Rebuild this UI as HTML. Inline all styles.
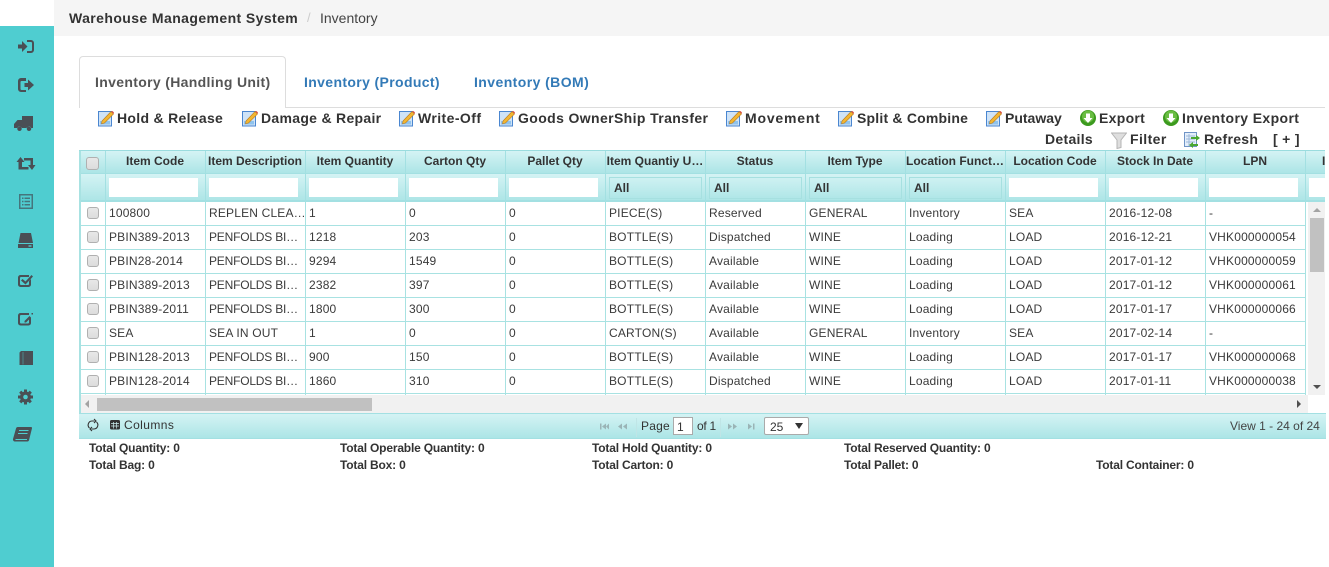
<!DOCTYPE html>
<html><head><meta charset="utf-8"><style>
*{box-sizing:border-box}
html,body{margin:0;padding:0;background:#fff}
body{width:1329px;height:567px;overflow:hidden;position:relative;font-family:"Liberation Sans",sans-serif;color:#333}
.a{position:absolute;white-space:nowrap}
#side{left:0;top:26px;width:54px;height:541px;background:#4fcdd0}
.tb{font-weight:bold;font-size:14px;letter-spacing:.3px;line-height:20px;color:#333}
.tb svg{position:absolute;left:-19px;top:1px;width:16px;height:18px}
.h{top:151px;height:22px;line-height:21px;text-align:center;font-weight:bold;font-size:12px;color:#333;width:100px;padding-right:1px;border-right:1px solid #a3e0e2;overflow:hidden}
.f{top:174px;height:27px;width:100px;border-right:1px solid #a3e0e2}
.f i{position:absolute;left:3px;top:4px;width:89px;height:19px;background:#fff;display:block}
.f b{position:absolute;left:3px;top:3px;width:93px;height:22px;border:1px solid #a6e0e0;font-size:12px;line-height:21px;padding-left:4px;color:#333}
.c{height:24px;line-height:23px;font-size:12px;letter-spacing:.18px;color:#3a3a3a;border-right:1px solid #a8e2e2;border-bottom:1px solid #a8e2e2;padding-left:3px;overflow:hidden;white-space:nowrap}
.d{letter-spacing:-.2px}
.cb{position:absolute;width:12px;height:12px;border:1px solid #b0b0b0;border-radius:3px;background:linear-gradient(#e8e8e8,#dcdcdc)}
.t{font-weight:bold;font-size:12px;line-height:14px;color:#333;letter-spacing:-.18px}
</style></head><body>
<div class="a" style="left:54px;top:0;width:1275px;height:36px;background:#f5f5f5"></div>
<div class="a" style="left:69px;top:9px;font-size:14px;font-weight:bold;letter-spacing:.41px;line-height:18px">Warehouse Management System</div>
<div class="a" style="left:307px;top:9px;font-size:13px;color:#ccc;line-height:18px">/</div>
<div class="a" style="left:320px;top:9px;font-size:14px;line-height:18px;color:#444">Inventory</div>

<div class="a" id="side"></div>
<svg class="a" style="left:0;top:0" width="54" height="567" viewBox="0 0 54 567" fill="#4a4f55">
<path d="M18 44.500h4v-3.500l5.500 5.500-5.500 5.500v-3.500h-4zM27 40h4a3 3 0 0 1 3 3v7a3 3 0 0 1-3 3h-4v-2h4a1 1 0 0 0 1-1v-7a1 1 0 0 0-1-1h-4z"/>
<path d="M26 78h-5a3 3 0 0 0-3 3v8a3 3 0 0 0 3 3h5v-2h-4.500a1 1 0 0 1-1-1v-7a1 1 0 0 1 1-1h4.500zM24.500 83h3.500v-3.500l6 5.500-6 5.500V87h-3.500z"/>
<path fill-rule="evenodd" d="M22 116h11v12h-2a2.500 2.500 0 0 0-4.500 0h-4.500a2.500 2.500 0 0 0-4.500 0H14v-4l3.500-4H22zM19.500 126.500a2.200 2.200 0 1 1 0 4.500 2.200 2.200 0 0 1 0-4.500zM29 126.500a2.200 2.200 0 1 1 0 4.500 2.200 2.200 0 0 1 0-4.500z"/>
<path d="M20.500 157l4 5h-2.500v5h6.500l0 2.500H18.500V162H16.500zM32 170l-4-5h2.500v-4.500H24V158h9v7h2.500z"/>
<path fill-rule="evenodd" d="M19 194h14v15H19zM20.500 195.500v12h11v-12zM22 197.500h1.500v1.500H22zm2.500 0h5.500v1.500h-5.500zM22 200.800h1.500v1.500H22zm2.500 0h5.500v1.500h-5.500zM22 204h1.500v1.500H22zm2.500 0h5.500v1.500h-5.500z" fill="#45757c"/>
<path d="M20.500 233h10.500l2 10H18.500zM18 244h15v4H18z"/><rect x="28.500" y="245" width="3" height="2" fill="#4fcdd0" opacity=".7"/>
<path d="M21 275h8v2h-8a1 1 0 0 0-1 1v6a1 1 0 0 0 1 1h7a1 1 0 0 0 1-1v-3l2-2v5.500a2.500 2.500 0 0 1-2.500 2.500h-8a2.500 2.500 0 0 1-2.500-2.500v-7a2.500 2.500 0 0 1 2.500-2.500zM22.500 279l3 2.500 6-6.500 1.500 1.500-7.500 8-4.500-4z"/>
<path d="M21 313h8v2h-8a1 1 0 0 0-1 1v6.500a1 1 0 0 0 1 1h7a1 1 0 0 0 1-1v-3l2-2v5.500a2.500 2.500 0 0 1-2.500 2.500h-8a2.500 2.500 0 0 1-2.500-2.500v-7.500a2.500 2.500 0 0 1 2.500-2.500zM29.500 316l1.500 1.500-5 5h-1.500v-1.500zM31.500 313h1.500v1.500h-1.500z"/>
<path d="M19.500 352.500l1.500-1.500h12v14H19.500z"/><rect x="22.500" y="352" width="1" height="12.500" fill="#4fcdd0" opacity=".45"/>
<g transform="translate(25.500 397)"><circle r="5.500"/><rect x="-1.500" y="-7.500" width="3" height="15"/><rect x="-1.500" y="-7.500" width="3" height="15" transform="rotate(45)"/><rect x="-1.500" y="-7.500" width="3" height="15" transform="rotate(90)"/><rect x="-1.500" y="-7.500" width="3" height="15" transform="rotate(135)"/><circle r="2.300" fill="#4fcdd0"/></g>
<path d="M18 427h13a1 1 0 0 1 1 1.300l-3 12a1.500 1.500 0 0 1-1.500 1.200H15a2 2 0 0 1-2-2.500l3-10.500a2 2 0 0 1 2-1.500z"/>
<path d="M19 430.500h9.500M18 433.500h9.500" stroke="#4fcdd0" stroke-width="1.100"/><path d="M15.500 439.500h11.500" stroke="#4fcdd0" stroke-width="1"/>
</svg>

<!-- tabs -->
<div class="a" style="left:286px;top:107px;width:1039px;height:1px;background:#ddd"></div>
<div class="a" style="left:79px;top:56px;width:207px;height:52px;background:#fff;border:1px solid #ddd;border-bottom:0;border-radius:4px 4px 0 0"></div>
<div class="a" style="left:95px;top:73px;font-size:14px;font-weight:bold;letter-spacing:.33px;line-height:18px;color:#555">Inventory (Handling Unit)</div>
<div class="a" style="left:304px;top:73px;font-size:14px;font-weight:bold;letter-spacing:.36px;line-height:18px;color:#337ab7">Inventory (Product)</div>
<div class="a" style="left:474px;top:73px;font-size:14px;font-weight:bold;letter-spacing:.42px;line-height:18px;color:#337ab7">Inventory (BOM)</div>

<!-- toolbar -->
<svg width="0" height="0" style="position:absolute"><defs>
<symbol id="p" viewBox="0 0 16 18"><rect x=".5" y="2.500" width="13" height="14.500" fill="#cfe3f7" stroke="#4a86d0"/><rect x="2" y="12" width="10" height="3.500" fill="#8fc3ee"/><path d="M4 12L13 2.500l2.500 2.500L6.500 14l-3 .8z" fill="#f2b632" stroke="#b87a1e" stroke-width=".6"/><path d="M13 2.500l2.500 2.500 .5-1.500-1.500-1.500z" fill="#d9564a"/></symbol>
<symbol id="g" viewBox="0 0 16 16"><circle cx="8" cy="8" r="8" fill="#3c9a1e"/><circle cx="8" cy="6.500" r="6" fill="#69bd42"/><path d="M6 3.500h4V8h2.500L8 13 3.500 8H6z" fill="#fff"/></symbol>
</defs></svg>
<div class="a tb" style="left:117px;top:108px"><svg><use href="#p"/></svg>Hold &amp; Release</div>
<div class="a tb" style="left:261px;top:108px"><svg><use href="#p"/></svg>Damage &amp; Repair</div>
<div class="a tb" style="left:418px;top:108px;letter-spacing:.42px"><svg><use href="#p"/></svg>Write-Off</div>
<div class="a tb" style="left:518px;top:108px;letter-spacing:.38px"><svg><use href="#p"/></svg>Goods OwnerShip Transfer</div>
<div class="a tb" style="left:745px;top:108px;letter-spacing:.8px"><svg><use href="#p"/></svg>Movement</div>
<div class="a tb" style="left:857px;top:108px;letter-spacing:.2px"><svg><use href="#p"/></svg>Split &amp; Combine</div>
<div class="a tb" style="left:1005px;top:108px;letter-spacing:0"><svg><use href="#p"/></svg>Putaway</div>
<div class="a tb" style="left:1099px;top:108px"><svg><use href="#g"/></svg>Export</div>
<div class="a tb" style="left:1182px;top:108px;letter-spacing:.38px"><svg><use href="#g"/></svg>Inventory Export</div>
<div class="a tb" style="left:1045px;top:129px">Details</div>
<div class="a tb" style="left:1130px;top:129px;letter-spacing:.42px">Filter</div>
<svg class="a" style="left:1111px;top:132px" width="16" height="17" viewBox="0 0 16 17"><path d="M.5 1h15L10 8v7.500l-4 1V8z" fill="#dedede" stroke="#b4b4b4"/></svg>
<div class="a tb" style="left:1204px;top:129px">Refresh</div>
<svg class="a" style="left:1184px;top:132px" width="16" height="16" viewBox="0 0 16 16"><rect x=".5" y=".5" width="12" height="14" fill="#e4eefa" stroke="#6f94c6"/><path d="M2 4h9M2 7h9M2 10h9M5 2v12" stroke="#9db8d9"/><path d="M7 5h5V3l4 3-4 3V7H7zM14 12H9v-2l-4 3 4 3v-2h5z" fill="#4aa832"/></svg>
<div class="a tb" style="left:1273px;top:129px;letter-spacing:.3px">[ + ]</div>

<!-- grid head -->
<div class="a" style="left:79px;top:150px;width:1246px;height:1px;background:#9adcde"></div>
<div class="a" style="left:79px;top:151px;width:1246px;height:22px;background:linear-gradient(#d4f3f4,#ace5e6)"></div>
<div class="a" style="left:79px;top:173px;width:1246px;height:1px;background:#a3e0e2"></div>
<div class="a" style="left:79px;top:174px;width:1246px;height:27px;background:linear-gradient(#d4f3f4,#ace5e6)"></div>
<div class="a" style="left:79px;top:200px;width:1246px;height:2px;background:#a3e0e2"></div>
<div class="a" style="left:79px;top:151px;width:2px;height:288px;background:#a8e2e2"></div>
<div class="a" style="left:1325px;top:414px;width:1px;height:25px;background:#a8e2e2"></div>

<div style="position:absolute;left:0;top:0;width:1325px;height:567px;overflow:hidden">
<div class="a h" style="left:80px;width:26px"></div>
<div class="a f" style="left:80px;width:26px"></div>
<div class="cb" style="left:86px;top:157px;width:13px;height:13px"></div>
<div class="a h" style="left:106px">Item Code</div>
<div class="a h" style="left:206px">Item Description</div>
<div class="a h" style="left:306px">Item Quantity</div>
<div class="a h" style="left:406px">Carton Qty</div>
<div class="a h" style="left:506px">Pallet Qty</div>
<div class="a h" style="left:606px">Item Quantiy U…</div>
<div class="a h" style="left:706px">Status</div>
<div class="a h" style="left:806px">Item Type</div>
<div class="a h" style="left:906px">Location Funct…</div>
<div class="a h" style="left:1006px">Location Code</div>
<div class="a h" style="left:1106px">Stock In Date</div>
<div class="a h" style="left:1206px">LPN</div>
<div class="a h" style="left:1306px;text-align:left;padding-left:16px;width:40px;border:0">I</div>
<div class="a f" style="left:106px"><i></i></div>
<div class="a f" style="left:206px"><i></i></div>
<div class="a f" style="left:306px"><i></i></div>
<div class="a f" style="left:406px"><i></i></div>
<div class="a f" style="left:506px"><i></i></div>
<div class="a f" style="left:606px"><b>All</b></div>
<div class="a f" style="left:706px"><b>All</b></div>
<div class="a f" style="left:806px"><b>All</b></div>
<div class="a f" style="left:906px"><b>All</b></div>
<div class="a f" style="left:1006px"><i></i></div>
<div class="a f" style="left:1106px"><i></i></div>
<div class="a f" style="left:1206px"><i></i></div>
<div class="a f" style="left:1306px;border:0"><i style="width:18px"></i></div>
</div>

<!-- rows -->
<div style="position:absolute;left:81px;top:202px;width:1227px;height:193px;overflow:hidden;background:#fff" id="rows">
<div style="display:grid;grid-template-columns:25px repeat(12,100px);grid-auto-rows:24px;position:absolute;left:0;top:0;width:1225px">
<div class="c"></div><div class="c">100800</div><div class="c">REPLEN CLEA…</div><div class="c">1</div><div class="c">0</div><div class="c">0</div><div class="c">PIECE(S)</div><div class="c">Reserved</div><div class="c">GENERAL</div><div class="c">Inventory</div><div class="c">SEA</div><div class="c">2016-12-08</div><div class="c">-</div>
<div class="c"></div><div class="c">PBIN389-2013</div><div class="c d">PENFOLDS BI…</div><div class="c">1218</div><div class="c">203</div><div class="c">0</div><div class="c">BOTTLE(S)</div><div class="c">Dispatched</div><div class="c">WINE</div><div class="c">Loading</div><div class="c">LOAD</div><div class="c">2016-12-21</div><div class="c">VHK000000054</div>
<div class="c"></div><div class="c">PBIN28-2014</div><div class="c d">PENFOLDS BI…</div><div class="c">9294</div><div class="c">1549</div><div class="c">0</div><div class="c">BOTTLE(S)</div><div class="c">Available</div><div class="c">WINE</div><div class="c">Loading</div><div class="c">LOAD</div><div class="c">2017-01-12</div><div class="c">VHK000000059</div>
<div class="c"></div><div class="c">PBIN389-2013</div><div class="c d">PENFOLDS BI…</div><div class="c">2382</div><div class="c">397</div><div class="c">0</div><div class="c">BOTTLE(S)</div><div class="c">Available</div><div class="c">WINE</div><div class="c">Loading</div><div class="c">LOAD</div><div class="c">2017-01-12</div><div class="c">VHK000000061</div>
<div class="c"></div><div class="c">PBIN389-2011</div><div class="c d">PENFOLDS BI…</div><div class="c">1800</div><div class="c">300</div><div class="c">0</div><div class="c">BOTTLE(S)</div><div class="c">Available</div><div class="c">WINE</div><div class="c">Loading</div><div class="c">LOAD</div><div class="c">2017-01-17</div><div class="c">VHK000000066</div>
<div class="c"></div><div class="c">SEA</div><div class="c">SEA IN OUT</div><div class="c">1</div><div class="c">0</div><div class="c">0</div><div class="c">CARTON(S)</div><div class="c">Available</div><div class="c">GENERAL</div><div class="c">Inventory</div><div class="c">SEA</div><div class="c">2017-02-14</div><div class="c">-</div>
<div class="c"></div><div class="c">PBIN128-2013</div><div class="c d">PENFOLDS BI…</div><div class="c">900</div><div class="c">150</div><div class="c">0</div><div class="c">BOTTLE(S)</div><div class="c">Available</div><div class="c">WINE</div><div class="c">Loading</div><div class="c">LOAD</div><div class="c">2017-01-17</div><div class="c">VHK000000068</div>
<div class="c"></div><div class="c">PBIN128-2014</div><div class="c d">PENFOLDS BI…</div><div class="c">1860</div><div class="c">310</div><div class="c">0</div><div class="c">BOTTLE(S)</div><div class="c">Dispatched</div><div class="c">WINE</div><div class="c">Loading</div><div class="c">LOAD</div><div class="c">2017-01-11</div><div class="c">VHK000000038</div>
<div class="c"></div><div class="c"></div><div class="c"></div><div class="c"></div><div class="c"></div><div class="c"></div><div class="c"></div><div class="c"></div><div class="c"></div><div class="c"></div><div class="c"></div><div class="c"></div><div class="c"></div>
</div>
<div class="cb" style="left:6px;top:5px"></div><div class="cb" style="left:6px;top:29px"></div><div class="cb" style="left:6px;top:53px"></div><div class="cb" style="left:6px;top:77px"></div><div class="cb" style="left:6px;top:101px"></div><div class="cb" style="left:6px;top:125px"></div><div class="cb" style="left:6px;top:149px"></div><div class="cb" style="left:6px;top:173px"></div>
</div>

<!-- v scrollbar -->
<div class="a" style="left:1308px;top:202px;width:17px;height:193px;background:#f1f1f1"></div>
<div class="a" style="left:1310px;top:218px;width:14px;height:54px;background:#c1c1c1"></div>
<div class="a" style="left:1313px;top:208px;border:4px solid transparent;border-top:0;border-bottom:4px solid #a3a3a3"></div>
<div class="a" style="left:1313px;top:385px;border:4px solid transparent;border-bottom:0;border-top:4px solid #505050"></div>
<!-- h scrollbar -->
<div class="a" style="left:81px;top:395px;width:1227px;height:18px;background:#f1f1f1"></div>
<div class="a" style="left:97px;top:398px;width:275px;height:13px;background:#c1c1c1"></div>
<div class="a" style="left:85px;top:400px;border:4px solid transparent;border-left:0;border-right:4px solid #a3a3a3"></div>
<div class="a" style="left:1297px;top:400px;border:4px solid transparent;border-right:0;border-left:4px solid #505050"></div>

<!-- pager -->
<div class="a" style="left:79px;top:413px;width:1247px;height:26px;border-top:1px solid #a3e0e2;border-bottom:1px solid #a3e0e2;background:linear-gradient(#d4f3f4,#ace5e6)"></div>
<svg class="a" style="left:86px;top:418px" width="14" height="14" viewBox="0 0 14 14" fill="none" stroke="#333" stroke-width="1.100"><path d="M3.500 10A4 4 0 0 1 6 3h2.500M10.500 4A4 4 0 0 1 8 11H5.500"/><path d="M8 1l2 2-2 2M6 9l-2 2 2 2"/></svg>
<svg class="a" style="left:110px;top:420px" width="10" height="10" viewBox="0 0 10 10"><rect width="10" height="9.500" rx="1.500" fill="#333"/><path d="M1 3.500h8M1 6h8M3.500 2v6.500M6.500 2v6.500" stroke="#cdeeee" stroke-width=".7"/></svg>
<div class="a" style="left:124px;top:418px;font-size:12px;letter-spacing:.42px;line-height:15px">Columns</div>
<svg class="a" style="left:599px;top:422px" width="50" height="9" viewBox="0 0 50 9" fill="#9ab4b6"><path d="M1 1h1.500v6H1zM3 4l4-3v6zM7 4l3-3v6zM19 4l4-3v6zM24 4l4-3v6z" transform="translate(0 .5)"/></svg>
<div class="a" style="left:636px;top:418px;width:1px;height:19px;background:#bfe5e6"></div>
<div class="a" style="left:641px;top:419px;font-size:12px;line-height:15px;letter-spacing:.2px">Page</div>
<div class="a" style="left:673px;top:417px;width:20px;height:18px;background:#fff;border:1px solid #aaa;font-size:12px;line-height:18px;padding-left:3px">1</div>
<div class="a" style="left:697px;top:419px;font-size:12px;line-height:15px;letter-spacing:-.3px">of 1</div>
<div class="a" style="left:720px;top:418px;width:1px;height:19px;background:#bfe5e6"></div>
<svg class="a" style="left:727px;top:422px" width="36" height="9" viewBox="0 0 36 9" fill="#9ab4b6"><path d="M1 1l4 3-4 3zM6 1l4 3-4 3zM21 1l4 3-4 3zM26 1h1.500v6H26z" transform="translate(0 .5)"/></svg>
<div class="a" style="left:764px;top:417px;width:45px;height:18px;background:#fff;border:1px solid #aaa;border-radius:2px;font-size:12px;line-height:18px;padding-left:5px">25</div>
<div class="a" style="left:795px;top:423px;border:4px solid transparent;border-bottom:0;border-top:6px solid #333"></div>
<div class="a" style="left:1230px;top:419px;font-size:12px;line-height:15px;color:#444">View 1 - 24 of 24</div>

<!-- totals -->
<div class="a t" style="left:89px;top:441px">Total Quantity: 0</div>
<div class="a t" style="left:340px;top:441px">Total Operable Quantity: 0</div>
<div class="a t" style="left:592px;top:441px">Total Hold Quantity: 0</div>
<div class="a t" style="left:844px;top:441px">Total Reserved Quantity: 0</div>
<div class="a t" style="left:89px;top:458px">Total Bag: 0</div>
<div class="a t" style="left:340px;top:458px">Total Box: 0</div>
<div class="a t" style="left:592px;top:458px">Total Carton: 0</div>
<div class="a t" style="left:844px;top:458px">Total Pallet: 0</div>
<div class="a t" style="left:1096px;top:458px">Total Container: 0</div>
</body></html>
